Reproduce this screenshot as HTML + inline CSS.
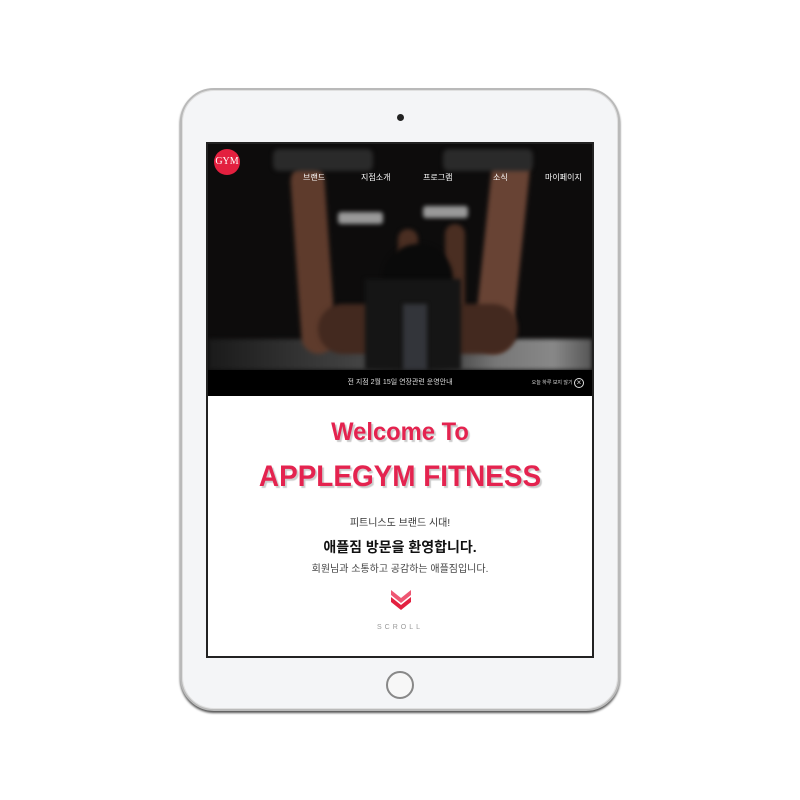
<!DOCTYPE html>
<html><head><meta charset="utf-8"><style>
*{margin:0;padding:0;box-sizing:border-box}
body{width:800px;height:800px;background:#fff;position:relative;overflow:hidden;font-family:"Liberation Sans","Noto Sans CJK KR",sans-serif}
.frame{position:absolute;left:180px;top:88px;width:440px;height:623px;border-radius:34px;background:#f4f5f7;border:2px solid #b9b9b9;box-shadow:0 2px 2px #555, inset 0 0 0 1px #e0e0e0}
.cam{position:absolute;left:397px;top:114px;width:7px;height:7px;border-radius:50%;background:#222}
.home{position:absolute;left:386px;top:671px;width:28px;height:28px;border-radius:50%;border:2px solid #888;background:#f7f7f7}
.screen{position:absolute;left:206px;top:142px;width:388px;height:516px;border:2px solid #222;background:#fff;overflow:hidden}
.photo{position:absolute;left:0;top:0;width:384px;height:226px;background:#0d0c0c;overflow:hidden}
.photo .b{position:absolute;filter:blur(2px)}
.bar{position:absolute;left:0;top:226px;width:384px;height:26px;background:#000;color:#ddd;font-size:7px;text-align:center;line-height:26px}
.nav{position:absolute;top:28px;color:#fff;font-size:8px}
.c{position:absolute;left:0;width:384px;text-align:center}
.w{font-family:"Comic Sans MS","Liberation Sans",sans-serif;color:#e4234f;font-weight:bold;text-shadow:2px 2px 1px #ccc}
</style></head><body>
<div class="frame"></div>
<div class="cam"></div>
<div class="home"></div>
<div class="screen">
<div class="photo">
 <div class="b" style="left:0;top:195px;width:384px;height:31px;background:linear-gradient(90deg,#1a1a1a,#444 40%,#222 55%,#777 75%,#888 90%,#555)"></div>
 <div class="b" style="left:88px;top:20px;width:34px;height:190px;background:#5e3b2c;border-radius:18px;transform:rotate(-4deg)"></div>
 <div class="b" style="left:275px;top:10px;width:38px;height:200px;background:#684334;border-radius:18px;transform:rotate(6deg)"></div>
 <div class="b" style="left:190px;top:85px;width:20px;height:90px;background:#4a2e22;border-radius:10px"></div>
 <div class="b" style="left:237px;top:80px;width:20px;height:90px;background:#4a2e22;border-radius:10px"></div>
 <div class="b" style="left:110px;top:160px;width:200px;height:50px;background:#43291f;border-radius:25px"></div>
 <div class="b" style="left:175px;top:100px;width:70px;height:60px;background:#0a0a0a;border-radius:35px 35px 10px 10px"></div>
 <div class="b" style="left:157px;top:135px;width:96px;height:91px;background:#151515"></div>
 <div class="b" style="left:195px;top:160px;width:24px;height:66px;background:#33353a"></div>
 <div class="b" style="left:65px;top:5px;width:100px;height:22px;background:#2a2a2a;border-radius:6px"></div>
 <div class="b" style="left:235px;top:5px;width:90px;height:22px;background:#2a2a2a;border-radius:6px"></div>
 <div class="b" style="left:130px;top:68px;width:45px;height:12px;background:#999;border-radius:3px"></div>
 <div class="b" style="left:215px;top:62px;width:45px;height:12px;background:#999;border-radius:3px"></div>
 <div style="position:absolute;left:6px;top:5px;width:26px;height:26px;border-radius:50%;background:#e3203f;color:#fff;font-family:'Liberation Serif',serif;font-size:10px;text-align:center;line-height:26px">GYM</div>
 <div class="nav" style="left:95px">브랜드</div>
 <div class="nav" style="left:153px">지점소개</div>
 <div class="nav" style="left:215px">프로그램</div>
 <div class="nav" style="left:285px">소식</div>
 <div class="nav" style="left:337px">마이페이지</div>
</div>
<div class="bar">전 지점 2월 15일 연장관련 운영안내
 <span style="position:absolute;right:8px;top:0;font-size:5px">오늘 하루 보지 않기 <span style="display:inline-block;width:10px;height:10px;border:1px solid #ddd;border-radius:50%;line-height:8px;font-size:8px;vertical-align:middle">×</span></span></div>
<div class="c w" style="top:274px;font-size:25px;transform:scaleX(0.95)">Welcome To</div>
<div class="c w" style="top:316px;font-size:30px;transform:scaleX(0.93)">APPLEGYM FITNESS</div>
<div class="c" style="top:370px;font-size:10px;color:#333">피트니스도 브랜드 시대!</div>
<div class="c" style="top:393px;font-size:14px;font-weight:bold;color:#111">애플짐 방문을 환영합니다.</div>
<div class="c" style="top:416px;font-size:10px;color:#444">회원님과 소통하고 공감하는 애플짐입니다.</div>
<svg style="position:absolute;left:182px;top:444px" width="22" height="24" viewBox="0 0 22 24"><path d="M1 2l10 8 10-8v5l-10 8-10-8z" fill="#ee5672"/><path d="M1 9l10 8 10-8v5l-10 8-10-8z" fill="#e3203f"/></svg>
<div class="c" style="top:480px;font-size:7px;letter-spacing:3px;color:#999">SCROLL</div>
</div>
</body></html>
